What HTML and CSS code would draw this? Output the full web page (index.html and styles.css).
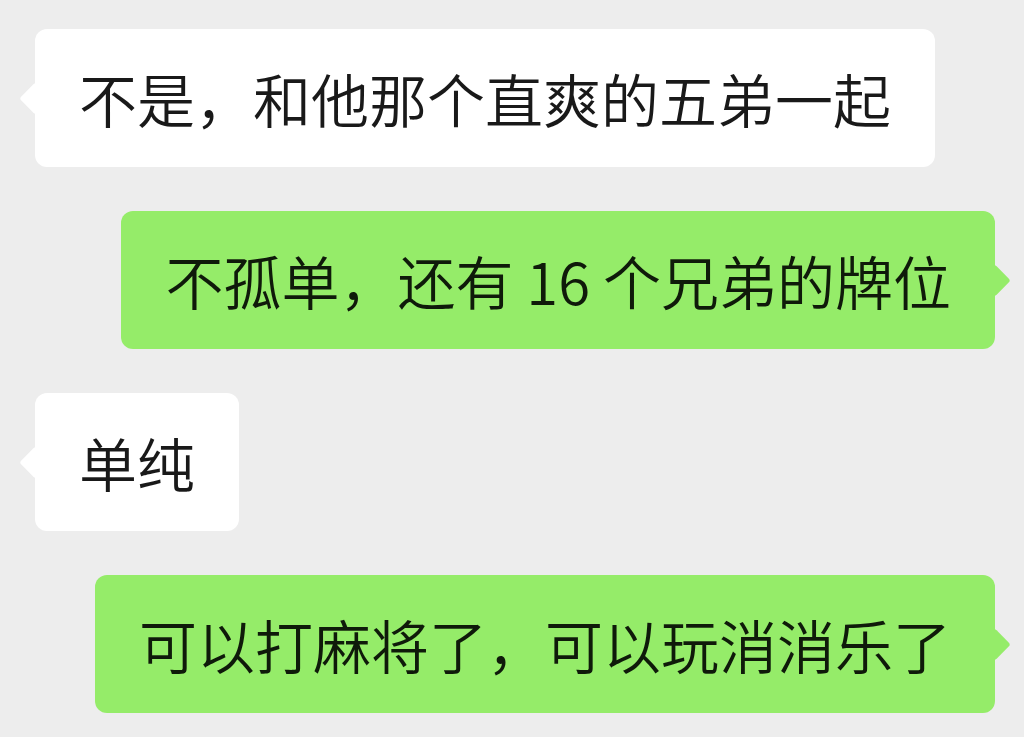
FILE: index.html
```html
<!DOCTYPE html>
<html lang="zh-CN">
<head>
    <meta charset="UTF-8">
    <title>聊天</title>
    <meta name="viewport" content="width=device-width, initial-scale=1.0">
    <link rel="stylesheet" href="styles.css">
</head>
<body>
    <div class="chat">
        <div class="msg msg-in">
            <div class="bubble">不是，和他那个直爽的五弟一起</div>
        </div>
        <div class="msg msg-out">
            <div class="bubble">不孤单，还有 16 个兄弟的牌位</div>
        </div>
        <div class="msg msg-in">
            <div class="bubble">单纯</div>
        </div>
        <div class="msg msg-out">
            <div class="bubble">可以打麻将了，可以玩消消乐了</div>
        </div>
    </div>
</body>
</html>
```

FILE: styles.css
```css
body {
    margin: 0;
    background: #ededed;
    font-family: 'Noto Sans CJK SC', 'Noto Sans', sans-serif;
    color: #191919;
    overflow: hidden;
}
.chat {
    display: flex;
    flex-direction: column;
    gap: 44px;
    padding: 29px 29px 0 35px;
}
.msg {
    display: flex;
}
.msg-out {
    justify-content: flex-end;
}
.bubble {
    position: relative;
    padding: 40px 44px;
    font-size: 58px;
    font-weight: 350;
    line-height: 58px;
    border-radius: 12px;
    white-space: nowrap;
}
/* little pointer on the side of each bubble */
.bubble::before {
    content: '';
    position: absolute;
    top: 50%;
    width: 23px;
    height: 23px;
    margin-top: -11.5px;
    border-radius: 3px;
    transform: rotate(45deg);
    background: inherit;
}
.msg-in .bubble {
    background: #fff;
}
.msg-in .bubble::before {
    left: -11px;
}
.msg-out .bubble {
    background: #95ec69;
    color: #0f1a0a;
}
.msg-out .bubble::before {
    right: -11px;
}
```
